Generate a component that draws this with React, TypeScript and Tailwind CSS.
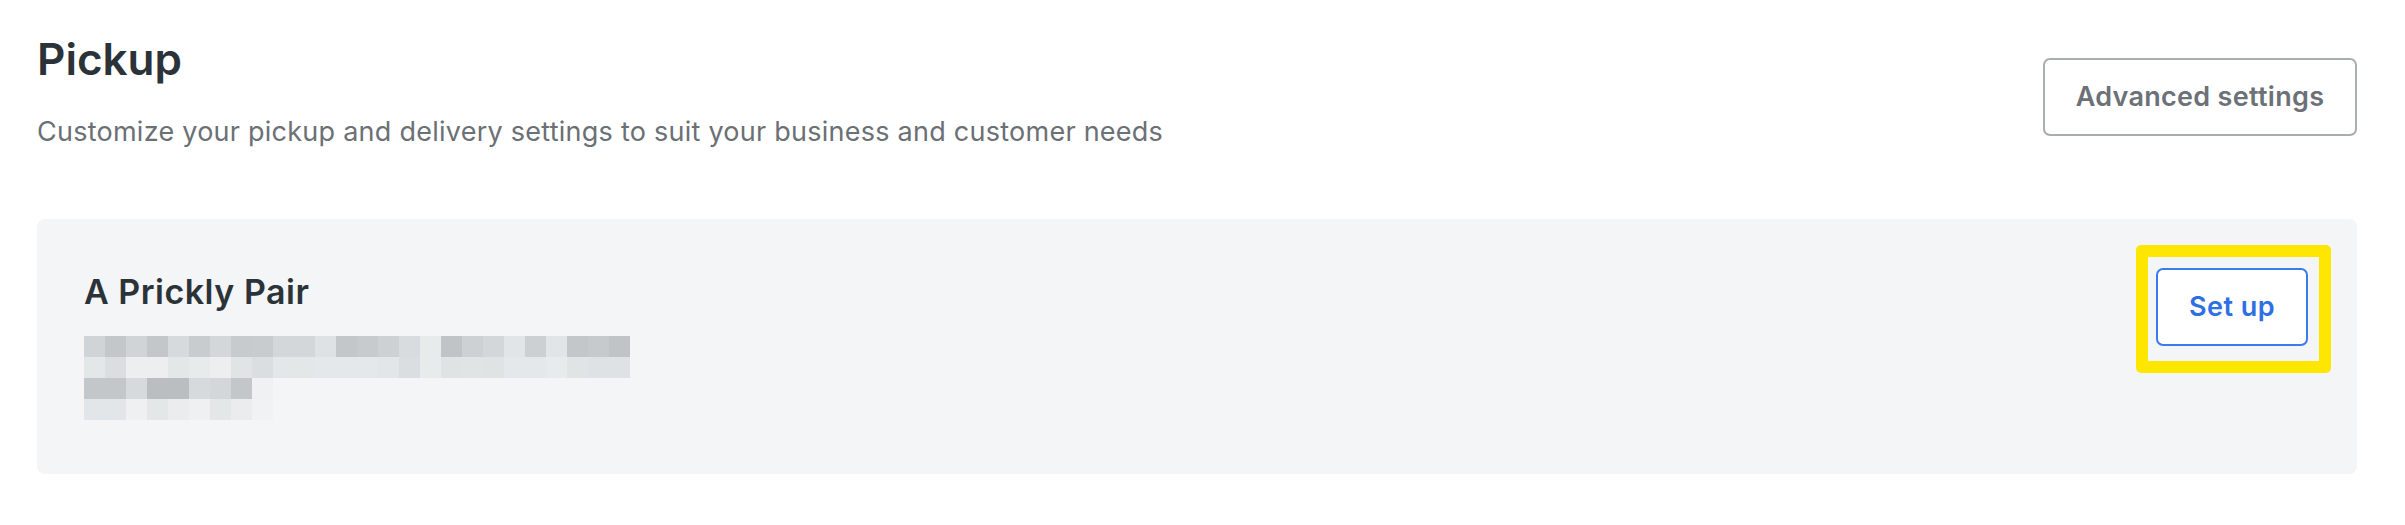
const ROW1 = [
  "#d0d4d6", "#c3c7ca", "#d0d4d6", "#c3c7ca", "#d6dadc", "#c8cccf", "#d3d7d9", "#c7cbce", "#c8cccf",
  "#d3d7d9", "#d3d7d9", "#dfe2e4", "#c3c7ca", "#c7cbce", "#cdd1d3", "#d8dcde", "#e8ebec", "#c0c4c6",
  "#cdd1d3", "#d3d7d9", "#e2e5e7", "#ccd0d2", "#e2e5e7", "#c3c7ca", "#c6cacd", "#c0c4c6",
];
const ROW2 = [
  "#e3e7e8", "#dadee0", "#eceeef", "#eceeef", "#e3e7e8", "#e8ebec", "#eceeef", "#e0e4e5", "#dadee0",
  "#e3e7e8", "#e3e7e8", "#e5e8ea", "#e5e8ea", "#e5e8ea", "#e3e6e8", "#dadee0", "#e8ebec", "#dfe3e3",
  "#e0e4e5", "#dfe3e3", "#e5e8ea", "#e5e8ea", "#e8ebec", "#e0e4e5", "#dfe2e4", "#dfe2e4",
];
const ROW3 = ["#c3c7ca", "#c3c7ca", "#d6dadc", "#babec1", "#babec1", "#d6dadc", "#d3d7d9", "#c3c7ca", "#eff1f2"];
const ROW4 = ["#e3e6e8", "#e3e6e8", "#eef0f1", "#e3e7e8", "#eaeced", "#eef0f1", "#e3e7e8", "#eaeced", "#f0f2f3"];

// blurred address lines
function PixelRow({ colors }: { colors: string[] }) {
  return (
    <div className="flex">
      {colors.map((c, i) => (
        <div key={i} className="w-[21px] h-[21px]" style={{ backgroundColor: c }} />
      ))}
    </div>
  );
}

export default function App() {
  return (
    <div className="min-h-screen bg-white pl-[37px] pr-[48px] pt-[33px] font-['Inter',sans-serif]">
      <div className="flex items-start justify-between">
        <div>
          <h1 className="text-[44px] leading-[52px] font-semibold text-[#2b3339]">Pickup</h1>
          <p className="mt-[31px] text-[27px] leading-[32px] tracking-[0.25px] text-[#6b7075]">
            Customize your pickup and delivery settings to suit your business and customer needs
          </p>
        </div>
        <button className="mt-[25px] h-[78px] w-[314px] rounded-[7px] border-2 border-[#a9adb1] bg-white text-[27px] font-semibold tracking-[0.3px] text-[#6b7177]">
          Advanced settings
        </button>
      </div>

      <div className="mt-[71px] flex justify-between rounded-[8px] bg-[#f3f5f6] pl-[47px] pr-[49px] pt-[49px] pb-[54px]">
        <div>
          <h2 className="mt-[4px] text-[34px] leading-[40px] font-semibold tracking-[0.5px] text-[#2b3339]">
            A Prickly Pair
          </h2>
          <div className="mt-[24px]">
            <PixelRow colors={ROW1} />
            <PixelRow colors={ROW2} />
            <PixelRow colors={ROW3} />
            <PixelRow colors={ROW4} />
          </div>
        </div>
        <div className="relative self-start">
          <button className="h-[78px] w-[152px] rounded-[7px] border-2 border-[#3a7bef] bg-white text-[27px] font-semibold tracking-[0.5px] text-[#2f6fe4]">
            Set up
          </button>
          <div className="pointer-events-none absolute -left-[20px] -right-[23px] -top-[23px] -bottom-[27px] rounded-[5px] border-[12px] border-[#ffe600]" />
        </div>
      </div>
    </div>
  );
}
